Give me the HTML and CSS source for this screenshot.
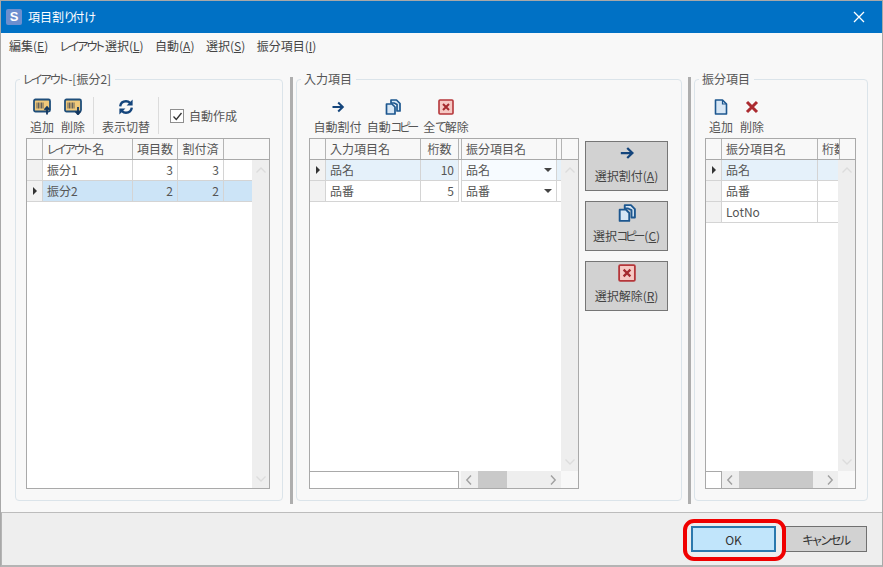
FILE: index.html
```html
<!DOCTYPE html>
<html lang="ja">
<head>
<meta charset="utf-8">
<title>項目割り付け</title>
<link rel="stylesheet" href="styles.css">
</head>
<body>
<svg class="defs" width="0" height="0">
  <symbol id="i-in" viewBox="0 0 18 17"><rect x="1" y="1.500" width="16" height="12" rx="1.500" fill="#f1c97a" stroke="#1f4e7a" stroke-width="1.800"/><path d="M4 4.500v6M5.500 4.500v6M7 4.500v6M8.500 4.500v6M10 4.500v6" stroke="#555" stroke-width=".9"/><path d="M14 16.500v-7M11.500 11.800l2.500-2.800 2.500 2.800" fill="none" stroke="#12365e" stroke-width="1.800"/></symbol>
  <symbol id="i-out" viewBox="0 0 18 17"><rect x="1" y="1.500" width="16" height="12" rx="1.500" fill="#f1c97a" stroke="#1f4e7a" stroke-width="1.800"/><path d="M4 4.500v6M5.500 4.500v6M7 4.500v6M8.500 4.500v6M10 4.500v6" stroke="#555" stroke-width=".9"/><path d="M14 9v7M11.500 13.500l2.500 2.800 2.500-2.800" fill="none" stroke="#12365e" stroke-width="1.800"/></symbol>
  <symbol id="i-sync" viewBox="0 0 16 16"><path d="M2.200 7.400C2.600 4.300 5 2.300 8 2.300c1.700 0 3 .6 4 1.600" fill="none" stroke="#14457c" stroke-width="2.400"/><path d="M14.600 .6v6h-6z" fill="#14457c"/><path d="M13.800 8.600c-.4 3.100-2.800 5.100-5.800 5.100-1.700 0-3-.6-4-1.600" fill="none" stroke="#14457c" stroke-width="2.400"/><path d="M1.400 15.400v-6h6z" fill="#14457c"/></symbol>
  <symbol id="i-arrow" viewBox="0 0 16 16"><path d="M2.500 8h10M8.200 3.500 12.800 8l-4.600 4.500" fill="none" stroke="#14457c" stroke-width="2"/></symbol>
  <symbol id="i-copy" viewBox="0 0 16 16"><path d="M6 1h5.500L15 4.500V12h-3V5.500L9 4H6z" fill="#d8e7f5" stroke="#1d578f" stroke-width="1.700" stroke-linejoin="round"/><path d="M1.500 5H7l3 3v7H1.500z" fill="#d8e7f5" stroke="#1d578f" stroke-width="1.700" stroke-linejoin="round"/></symbol>
  <symbol id="i-clear" viewBox="0 0 16 16"><rect x="1" y="1" width="14" height="14" rx="1" fill="#f6c9c4" stroke="#b5363a" stroke-width="1.600"/><path d="M5 5l6 6M11 5l-6 6" stroke="#a52a2e" stroke-width="2"/></symbol>
  <symbol id="i-doc" viewBox="0 0 16 16"><path d="M2.500 1h7l4 4v10h-11z" fill="#d8e7f5" stroke="#1d578f" stroke-width="1.600" stroke-linejoin="round"/><path d="M9.500 1v4h4" fill="none" stroke="#1d578f" stroke-width="1.200"/></symbol>
  <symbol id="i-x" viewBox="0 0 16 16"><path d="M3 3l10 10M13 3 3 13" stroke="#ab2b30" stroke-width="3"/></symbol>
  <symbol id="i-up" viewBox="0 0 12 8"><path d="M1.500 6.500 6 2l4.500 4.500" fill="none" stroke="#dcdcdc" stroke-width="1.300"/></symbol>
  <symbol id="i-down" viewBox="0 0 12 8"><path d="M1.500 1.500 6 6l4.500-4.500" fill="none" stroke="#dcdcdc" stroke-width="1.300"/></symbol>
  <symbol id="i-left" viewBox="0 0 8 12"><path d="M6 1.500 1.800 6 6 10.500" fill="none" stroke="#a0a0a0" stroke-width="1.400"/></symbol>
  <symbol id="i-right" viewBox="0 0 8 12"><path d="M2 1.500 6.200 6 2 10.500" fill="none" stroke="#a0a0a0" stroke-width="1.400"/></symbol>
</svg>

<div class="window">
  <header class="titlebar">
    <span class="appicon">S</span>
    <span class="title">項目割<span class="kn">り</span>付<span class="kn">け</span></span>
    <svg class="close" width="12" height="12" viewBox="0 0 12 12"><path d="M1 1l10 10M11 1 1 11" stroke="#fff" stroke-width="1.300"/></svg>
  </header>

  <nav class="menu">
    <span>編集(<u>E</u>)</span>
    <span><span class="kn">レイアウ</span>ト選択(<u>L</u>)</span>
    <span>自動(<u>A</u>)</span>
    <span>選択(<u>S</u>)</span>
    <span>振分項目(<u>I</u>)</span>
  </nav>

  <main class="main">
    <fieldset class="panel panel-left">
      <legend><span class="kn">レイアウ</span>ト-[振分2]</legend>
      <div class="toolbar">
        <div class="tool tool-s"><svg class="ti ti-l"><use href="#i-in"/></svg><span>追加</span></div>
        <div class="tool tool-s"><svg class="ti ti-l"><use href="#i-out"/></svg><span>削除</span></div>
        <div class="sep sep-a"></div>
        <div class="tool tool-w"><svg class="ti"><use href="#i-sync"/></svg><span>表示切替</span></div>
        <div class="sep sep-b"></div>
        <label class="check">
          <span class="box"><svg width="11" height="11" viewBox="0 0 11 11"><path d="M1.500 5.500 4.300 8.500 9.500 2" fill="none" stroke="#333" stroke-width="1.300"/></svg></span>
          <span>自動作成</span>
        </label>
      </div>
      <div class="grid">
        <div class="ghead">
          <div class="c rh"></div>
          <div class="c w90"><span class="kn">レイアウ</span>ト名</div>
          <div class="c w45 ctr">項目数</div>
          <div class="c w46 ctr">割付済</div>
        </div>
        <div class="gbody">
          <div class="rows">
            <div class="row">
              <div class="c rh"></div>
              <div class="c w90">振分1</div>
              <div class="c w45 num">3</div>
              <div class="c w46 num">3</div>
              <div class="c fill"></div>
            </div>
            <div class="row sel-strong">
              <div class="c rh"><i class="mark"></i></div>
              <div class="c w90">振分2</div>
              <div class="c w45 num">2</div>
              <div class="c w46 num">2</div>
              <div class="c fill"></div>
            </div>
          </div>
          <div class="vscroll">
            <svg class="chev"><use href="#i-up"/></svg>
            <svg class="chev"><use href="#i-down"/></svg>
          </div>
        </div>
      </div>
    </fieldset>

    <div class="splitter s1"></div>

    <fieldset class="panel panel-mid">
      <legend>入力項目</legend>
      <div class="toolbar">
        <div class="tool tool-m"><svg class="ti"><use href="#i-arrow"/></svg><span>自動割付</span></div>
        <div class="tool tool-m"><svg class="ti"><use href="#i-copy"/></svg><span>自動<span class="kn2">コピー</span></span></div>
        <div class="tool tool-m tool-last"><svg class="ti"><use href="#i-clear"/></svg><span>全<span class="kn">て</span>解除</span></div>
      </div>
      <div class="midrow">
        <div class="grid grid-mid">
          <div class="ghead">
            <div class="c rh"></div>
            <div class="c w95">入力項目名</div>
            <div class="c w38 ctr">桁数</div>
            <div class="c w96 dbl">振分項目名</div>
            <div class="c w5"></div>
          </div>
          <div class="gbody">
            <div class="rows">
              <div class="row sel-soft">
                <div class="c rh"><i class="mark"></i></div>
                <div class="c w95">品名</div>
                <div class="c w38 num">10</div>
                <div class="c w96 dbl combo active">品名<i class="drop"></i></div>
                <div class="c fill"></div>
              </div>
              <div class="row">
                <div class="c rh"></div>
                <div class="c w95">品番</div>
                <div class="c w38 num">5</div>
                <div class="c w96 dbl combo">品番<i class="drop"></i></div>
                <div class="c fill"></div>
              </div>
            </div>
            <div class="vscroll">
              <svg class="chev"><use href="#i-up"/></svg>
              <svg class="chev"><use href="#i-down"/></svg>
            </div>
          </div>
          <div class="gfoot">
            <div class="fcell fcell-mid"></div>
            <div class="hscroll">
              <svg class="arr"><use href="#i-left"/></svg>
              <div class="thumb th-mid"></div>
              <svg class="arr"><use href="#i-right"/></svg>
            </div>
            <div class="corner"></div>
          </div>
        </div>
        <div class="sidebtns">
          <button class="sbtn"><svg class="ti"><use href="#i-arrow"/></svg><span>選択割付(<u>A</u>)</span></button>
          <button class="sbtn"><svg class="ti"><use href="#i-copy"/></svg><span>選択<span class="kn2">コピー</span>(<u>C</u>)</span></button>
          <button class="sbtn"><svg class="ti"><use href="#i-clear"/></svg><span>選択解除(<u>R</u>)</span></button>
        </div>
      </div>
    </fieldset>

    <div class="splitter s2"></div>

    <fieldset class="panel panel-right">
      <legend>振分項目</legend>
      <div class="toolbar">
        <div class="tool tool-s"><svg class="ti"><use href="#i-doc"/></svg><span>追加</span></div>
        <div class="tool tool-s"><svg class="ti"><use href="#i-x"/></svg><span>削除</span></div>
      </div>
      <div class="grid">
        <div class="ghead">
          <div class="c rh"></div>
          <div class="c w96">振分項目名</div>
          <div class="c w22">桁数</div>
        </div>
        <div class="gbody">
          <div class="rows">
            <div class="row sel-soft">
              <div class="c rh"><i class="mark"></i></div>
              <div class="c w96">品名</div>
              <div class="c w22 cutnum">10</div>
            </div>
            <div class="row">
              <div class="c rh"></div>
              <div class="c w96">品番</div>
              <div class="c w22"></div>
            </div>
            <div class="row">
              <div class="c rh"></div>
              <div class="c w96">LotNo</div>
              <div class="c w22 cutnum">10</div>
            </div>
          </div>
          <div class="vscroll">
            <svg class="chev"><use href="#i-up"/></svg>
            <svg class="chev"><use href="#i-down"/></svg>
          </div>
        </div>
        <div class="gfoot">
          <div class="fcell fcell-right"></div>
          <div class="hscroll">
            <svg class="arr"><use href="#i-left"/></svg>
            <div class="thumb th-right"></div>
            <svg class="arr"><use href="#i-right"/></svg>
          </div>
          <div class="corner"></div>
        </div>
      </div>
    </fieldset>
  </main>

  <footer class="footer">
    <button class="fbtn ok">OK<span class="highlight"></span></button>
    <button class="fbtn cancel"><span class="kn1">キャンセル</span></button>
  </footer>
</div>
</body>
</html>
```
FILE: styles.css
```css
* { box-sizing: border-box; }
html, body { margin: 0; padding: 0; }
body {
  width: 883px;
  height: 567px;
  overflow: hidden;
  font-family: "Noto Sans CJK JP", "Noto Sans", sans-serif;
  font-size: 12px;
  font-feature-settings: "palt";
  color: #444;
}
.defs { position: absolute; }
u { text-underline-offset: 1px; }
.kn { letter-spacing: -1.800px; }
.kn1 { letter-spacing: -1.400px; }
.kn2 { letter-spacing: -3px; margin-right: 2px; }

.window {
  width: 883px;
  height: 567px;
  display: flex;
  flex-direction: column;
  background: #f8f8f8;
  border: 1px solid #a8a8a8;
  border-bottom: 2px solid #b4b4b4;
}

.titlebar {
  height: 32px;
  flex: none;
  background: #0071c5;
  display: flex;
  align-items: center;
  padding: 0 0 0 5px;
  color: #fff;
}
.appicon {
  width: 16px;
  height: 16px;
  border-radius: 2px;
  background: #6d8fcf;
  color: #fff;
  font: bold 13px/16px "Liberation Sans", sans-serif;
  text-align: center;
}
.title { margin-left: 6px; font-size: 12px; line-height: 16px; }
.close { margin-left: auto; margin-right: 17px; }

.menu {
  height: 27px;
  flex: none;
  display: flex;
  align-items: center;
  gap: 11.500px;
  padding: 0 0 2px 8px;
  color: #444;
}

.main {
  flex: none;
  height: 452px;
  display: flex;
  align-items: flex-start;
  padding: 12px 0 0 14px;
}
.panel {
  margin: 0;
  padding: 0 12px 0 10px;
  height: 429px;
  border: 1px solid #dbe4ea;
  border-radius: 4px;
  background: #f8f8f8;
  min-width: 0;
  flex: none;
}
.panel legend {
  padding: 0 4px 0 3px;
  line-height: 14px;
  height: 14px;
  font-size: 12px;
  color: #555;
}
.panel-left { width: 268px; }
.panel-left legend, .panel-right legend { margin-left: -6px; }
.panel-mid { width: 386px; padding: 0 13px 0 12px; }
.panel-mid legend { margin-left: -8px; }
.panel-right { width: 174px; padding: 0 11px 0 10px; }
.splitter {
  flex: none;
  width: 3px;
  height: 427px;
  margin-top: 5px;
  background: #aeaeae;
}
.s1 { margin-left: 7px; margin-right: 3px; }
.s2 { margin-left: 6px; margin-right: 3px; }

.toolbar {
  height: 41px;
  margin-top: 11px;
  display: flex;
  align-items: flex-start;
  color: #555;
}
.tool {
  display: flex;
  flex-direction: column;
  align-items: center;
  white-space: nowrap;
  line-height: 14px;
}
.tool > span { margin-top: 5px; }
.ti { width: 16px; height: 16px; display: block; margin-top: 2px; }
.ti-l { width: 18px; height: 17px; margin-top: 1px; }
.tool-s { width: 24px; margin-right: 7px; }
.tool-s:first-child { margin-left: 4px; }
.tool-w { width: 48px; }
.tool-m { width: 47px; margin-right: 8px; }
.tool-m:first-child { margin-left: 5px; }
.tool-last { width: 44px; }
.sep { width: 1px; height: 37px; background: #dcdcdc; }
.sep-a { margin: 0 8px 0 1px; }
.sep-b { margin: 0 11px 0 8px; }
.check { display: flex; align-items: center; gap: 5px; margin-top: 12px; line-height: 14px; }
.box {
  width: 14px;
  height: 14px;
  border: 1px solid #8f8f8f;
  background: #fff;
  display: flex;
  align-items: center;
  justify-content: center;
}

.grid {
  height: 351px;
  border: 1px solid #a9a9a9;
  background: #fff;
  display: flex;
  flex-direction: column;
  overflow: hidden;
  color: #555;
}
.grid-mid { width: 270px; flex: none; }
.ghead {
  height: 21px;
  flex: none;
  display: flex;
  background: #f8f8f8;
  border-bottom: 1px solid #a9a9a9;
}
.gbody { flex: 1; display: flex; min-height: 0; }
.rows { flex: 1; min-width: 0; }
.row {
  height: 21px;
  display: flex;
  overflow: hidden;
}
.c {
  flex: none;
  height: 100%;
  line-height: 20px;
  padding: 0 4px 0 4px;
  white-space: nowrap;
  overflow: hidden;
  border-right: 1px solid #d4d4d4;
  border-bottom: 1px solid #d4d4d4;
}
.ghead .c { border-right: 1px solid #b4b4b4; border-bottom: 0; }
.rh {
  width: 16px;
  padding: 0;
  background: #f2f2f2;
  display: flex;
  align-items: center;
  justify-content: center;
}
.ghead .rh { background: #f8f8f8; }
.w90 { width: 90px; }
.w45 { width: 45px; }
.w46 { width: 46px; }
.w95 { width: 95px; }
.w38 { width: 38px; }
.w96 { width: 96px; }
.w22 { width: 22px; padding: 0 0 0 4px; }
.row .w22 { border-right: 0; }
.w5 { width: 5px; padding: 0; }
.fill { flex: 1; border-right: 0; }
.ctr { padding: 0; text-align: center; }
.num { text-align: right; }
.cutnum { padding-left: 20px; }
.dbl { margin-left: 2px; border-left: 1px solid #d4d4d4; padding-left: 4px; }
.ghead .dbl { border-left: 1px solid #b4b4b4; }
.mark {
  width: 0; height: 0;
  border-left: 4px solid #333;
  border-top: 4px solid transparent;
  border-bottom: 4px solid transparent;
}
.sel-strong .c:not(.rh) { background: #cce4f7; }
.sel-soft .c:not(.rh) { background: #e5f1fa; }
.sel-soft .active:not(.rh) { background: #f7fbff; }
.combo { position: relative; }
.drop {
  position: absolute;
  right: 4px;
  top: 8px;
  width: 0; height: 0;
  border-top: 4px solid #444;
  border-left: 4px solid transparent;
  border-right: 4px solid transparent;
}

.vscroll {
  width: 17px;
  flex: none;
  background: #eee;
  display: flex;
  flex-direction: column;
  justify-content: space-between;
  align-items: center;
  padding: 6px 0 5px;
}
.chev { width: 12px; height: 8px; display: block; }

.gfoot { height: 17px; flex: none; display: flex; background: #f8f8f8; }
.fcell { background: #fff; border-top: 1px solid #a9a9a9; border-right: 1px solid #a9a9a9; flex: none; }
.fcell-mid { width: 149px; margin-right: 2px; }
.fcell-right { width: 16px; }
.hscroll {
  flex: 1;
  background: #eee;
  display: flex;
  align-items: center;
}
.arr { width: 8px; height: 12px; flex: none; margin: 0 4px; }
.hscroll .arr:last-child { margin-left: auto; }
.thumb { height: 17px; background: #c9c9c9; flex: none; }
.th-mid { width: 29px; margin-left: 1px; }
.th-right { width: 74px; margin-left: 1px; }
.corner { width: 17px; flex: none; background: #f8f8f8; }

.midrow { display: flex; align-items: flex-start; gap: 6px; }
.sidebtns { display: flex; flex-direction: column; gap: 10px; padding-top: 3px; }
.sbtn {
  width: 83px;
  height: 50px;
  padding: 2px 0 0;
  background: #d2d2d2;
  border: 1px solid #767676;
  font: inherit;
  font-feature-settings: "palt";
  color: #444;
  display: flex;
  flex-direction: column;
  align-items: center;
  line-height: 14px;
}
.sbtn .ti { width: 18px; height: 18px; margin: 0; }
.sbtn > span { margin-top: 7px; white-space: nowrap; }

.footer {
  flex: 1;
  background: #eee;
  border-top: 1px solid #bcbcbc;
  border-left: 1px solid #b4b4b4;
  display: flex;
  align-items: flex-start;
  gap: 9px;
  padding: 13px 0 0 689px;
}
.fbtn {
  height: 26px;
  font: inherit;
  font-feature-settings: "palt";
  color: #333;
  padding: 0;
  background: #d2d2d2;
  border: 1px solid #707070;
}
.ok {
  position: relative;
  width: 85px;
  background: #c1e5fb;
  border: 2px solid #2b78ad;
}
.cancel { width: 82px; }
.highlight {
  position: absolute;
  left: -10px;
  top: -9px;
  width: 103px;
  height: 42px;
  border: 4px solid #f00000;
  border-radius: 11px;
}
```
